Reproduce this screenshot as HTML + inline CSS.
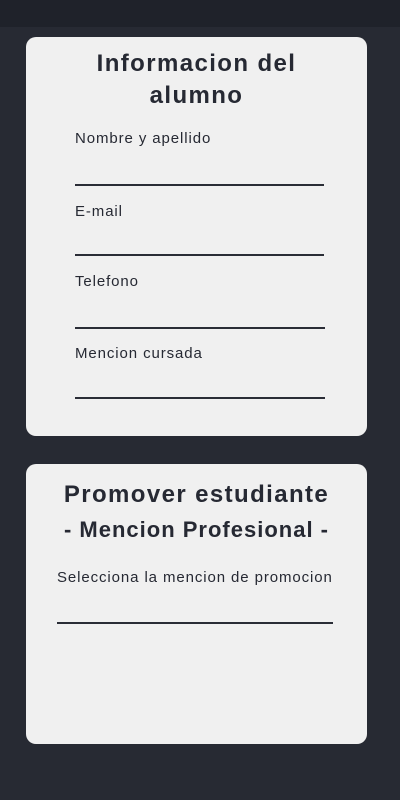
<!DOCTYPE html>
<html><head><meta charset="utf-8"><style>
*{margin:0;padding:0;box-sizing:border-box}
body{width:400px;height:800px;background:#272a33;position:relative;overflow:hidden;font-family:"Liberation Sans",sans-serif;color:#262933}
.top{position:absolute;left:0;top:0;width:400px;height:27px;background:#1f222a}
.card{position:absolute;left:26px;width:341px;background:#f0f0f0;border-radius:10px}
.t{position:absolute;left:0;width:100%;text-align:center;font-size:24px;font-weight:bold;letter-spacing:1.4px;line-height:32px}
.l{position:absolute;font-size:15px;letter-spacing:0.9px}
.ln{position:absolute;height:2px;background:#2a2d36}
</style></head><body>
<div class="top"></div>
<div class="card" style="top:37px;height:399px">
<div class="t" style="top:11px">Informacion del<br>alumno</div>
<div class="l" style="left:49px;top:93px">Nombre y apellido</div>
<div class="ln" style="left:49px;top:147px;width:249px"></div>
<div class="l" style="left:49px;top:166px">E-mail</div>
<div class="ln" style="left:49px;top:217px;width:249px"></div>
<div class="l" style="left:49px;top:236px">Telefono</div>
<div class="ln" style="left:49px;top:290px;width:250px"></div>
<div class="l" style="left:49px;top:308px">Mencion cursada</div>
<div class="ln" style="left:49px;top:360px;width:250px"></div>
</div>
<div class="card" style="top:464px;height:280px">
<div class="t" style="top:15px">Promover estudiante</div>
<div class="t" style="top:50px;font-size:22px;letter-spacing:1px">- Mencion Profesional -</div>
<div class="l" style="left:31px;top:105px">Selecciona la mencion de promocion</div>
<div class="ln" style="left:31px;top:158px;width:276px"></div>
</div>
</body></html>
